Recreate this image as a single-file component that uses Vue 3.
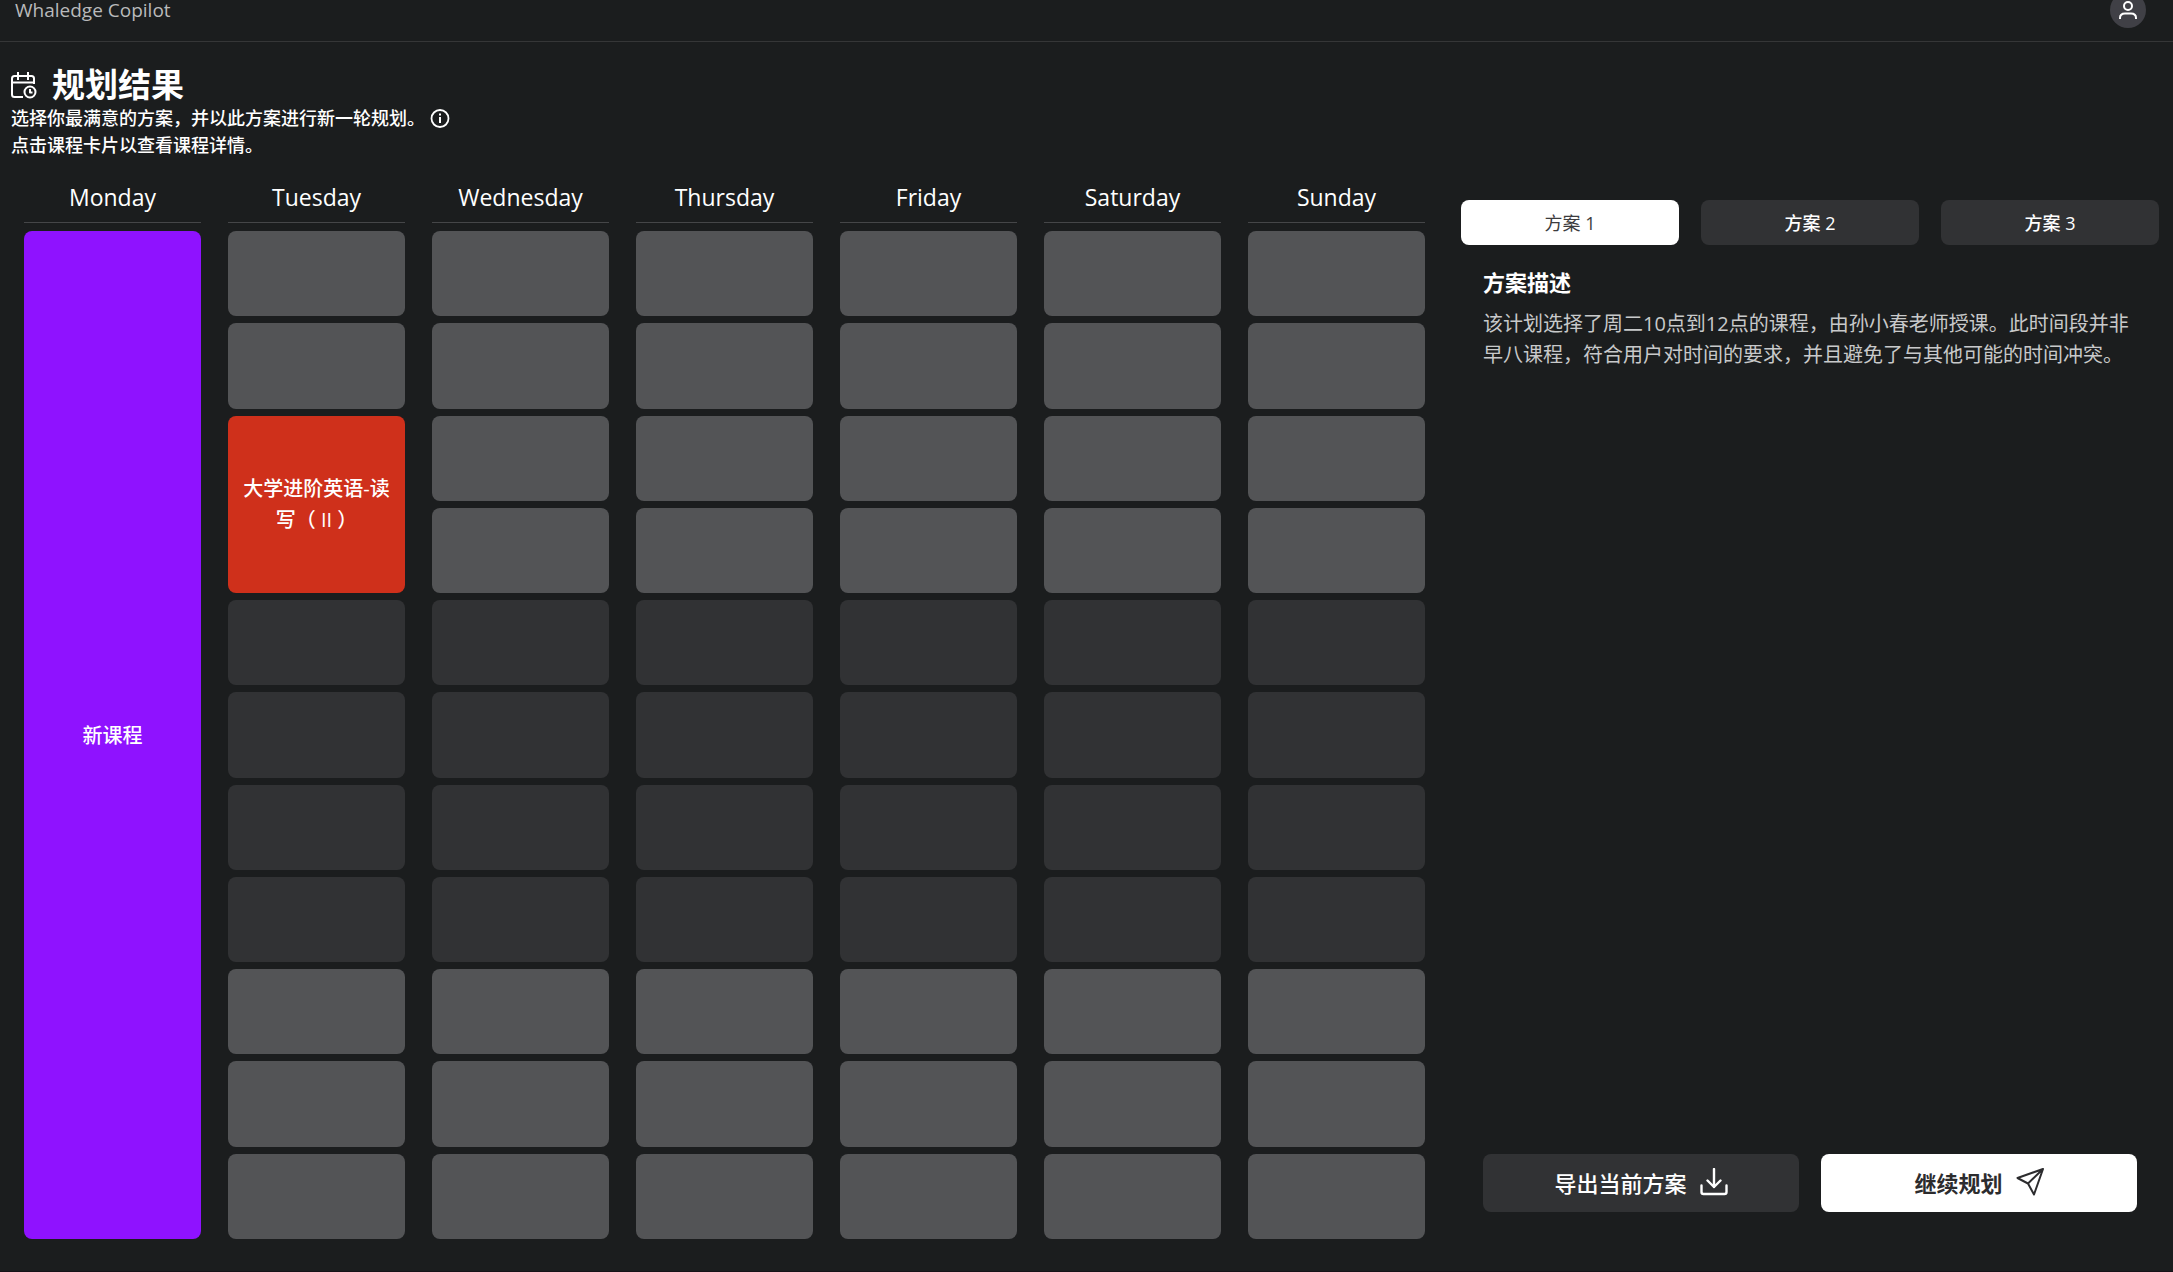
<script setup>
import { ref } from 'vue'

const days = ['Monday', 'Tuesday', 'Wednesday', 'Thursday', 'Friday', 'Saturday', 'Sunday']
const courses = [
  { day: 0, start: 0, span: 11, name: '新课程', color: '#8f12ff' },
  { day: 1, start: 2, span: 2, name: '大学进阶英语-读写（ II ）', color: '#cf301b' }
]

// Builds the cells of one day: courses take several rows, the rest are free slots.
function cellsOf(day) {
  const cells = []
  for (let row = 0; row < 11; ) {
    const course = courses.find((c) => c.day === day && c.start === row)
    cells.push(course ? { row, ...course } : { row, span: 1, dim: row >= 4 && row < 8 })
    row += course ? course.span : 1
  }
  return cells
}
const columns = days.map((name, i) => ({ name, cells: cellsOf(i) }))
const plans = ['方案 1', '方案 2', '方案 3']
const active = ref(0)
</script>

<template>
  <div class="page">
    <header class="topbar">
      <span class="brand">Whaledge Copilot</span>
      <button class="avatar" aria-label="Account">
        <svg width="20" height="20" viewBox="0 0 20 20" fill="none" stroke="#fff" stroke-width="2">
          <circle cx="10" cy="6" r="4" />
          <path d="M2 19v-1c0-3 2-4.500 5-4.500h6c3 0 5 1.500 5 4.500v1" />
        </svg>
      </button>
    </header>

    <section class="intro">
      <h1>
        <svg width="26" height="28" viewBox="0 0 26 28" fill="none" stroke="#fff" stroke-width="2" stroke-linejoin="round">
          <path d="M12 26H3.500Q1 26 1 23.500V7.500Q1 5 3.500 5H20.500Q23 5 23 7.500V13M1 11.500H23" />
          <path d="M7 1v8M17 1v8" />
          <circle cx="19" cy="21" r="5.500" />
          <path d="M19 18v3.500h2.500" />
        </svg>
        规划结果
      </h1>
      <p>
        选择你最满意的方案，并以此方案进行新一轮规划。
        <button class="info" aria-label="Info">
          <svg width="20" height="20" viewBox="0 0 20 20" fill="none" stroke="#fff" stroke-width="2">
            <circle cx="10" cy="9.500" r="8.500" stroke-width="1.800" />
            <path d="M10 8v6M10 4.500v2" />
          </svg>
        </button>
      </p>
      <p>点击课程卡片以查看课程详情。</p>
    </section>

    <main class="body">
      <section class="calendar">
        <div v-for="col in columns" :key="col.name" class="day">
          <h2>{{ col.name }}</h2>
          <div class="slots">
            <component
              :is="cell.name ? 'button' : 'div'"
              v-for="cell in col.cells"
              :key="cell.row"
              class="cell"
              :class="{ dim: cell.dim }"
              :style="{ gridRow: 'span ' + cell.span, background: cell.color }"
            >{{ cell.name }}</component>
          </div>
        </div>
      </section>

      <aside class="side">
        <nav class="tabs">
          <button
            v-for="(plan, i) in plans"
            :key="plan"
            class="tab"
            :class="{ active: active === i }"
            @click="active = i"
          >{{ plan }}</button>
        </nav>
        <div class="detail">
          <h3>方案描述</h3>
          <p>该计划选择了周二10点到12点的课程，由孙小春老师授课。此时间段并非早八课程，符合用户对时间的要求，并且避免了与其他可能的时间冲突。</p>
        </div>
        <div class="actions">
          <button class="action">
            导出当前方案
            <svg width="28" height="28" viewBox="0 0 28 28" fill="none" stroke="#fff" stroke-width="2.400" stroke-linecap="round" stroke-linejoin="round">
              <path d="M14 1v18M7.500 12.500 14 19l6.500-6.500M1.500 17.500v6.500q0 2 2 2h21q2 0 2-2V17.500" />
            </svg>
          </button>
          <button class="action primary">
            继续规划
            <svg width="28" height="28" viewBox="0 0 28 28" fill="none" stroke="#2c2c2e" stroke-width="2" stroke-linejoin="round">
              <path d="M27 1 1.500 10 12 15.500 18 26.500ZM27 1 12 15.500" />
            </svg>
          </button>
        </div>
      </aside>
    </main>
  </div>
</template>

<style>
body {
  background: #1b1d1e;
}
</style>

<style scoped>
.page {
  box-sizing: border-box;
  min-height: 100vh;
  display: flex;
  flex-direction: column;
  border-bottom: 1px solid #161217;
  color: #fff;
  font-family: "Open Sans", "Noto Sans CJK SC", sans-serif;
}
h1, h2, h3, p {
  margin: 0;
}
button {
  border: 0;
  padding: 0;
  font: inherit;
  color: inherit;
  cursor: pointer;
}
.topbar {
  height: 41px;
  display: flex;
  justify-content: space-between;
  align-items: flex-start;
  padding: 0 27px 0 15px;
  border-bottom: 1px solid #353637;
}
.brand {
  font-size: 19px;
  line-height: 20px;
  color: #b9babb;
}
.avatar {
  width: 36px;
  height: 36px;
  margin-top: -8px;
  border-radius: 50%;
  background: #404046;
  display: grid;
  place-items: center;
}
.intro {
  padding: 23px 11px 0;
  font-size: 18px;
  line-height: 27px;
  font-weight: 500;
}
.intro p {
  display: flex;
  align-items: center;
  gap: 5px;
}
h1 {
  display: flex;
  align-items: center;
  gap: 15px;
  font-size: 33px;
  line-height: 40px;
  font-weight: 700;
}
.info {
  display: grid;
  background: none;
}
.body {
  flex: 1;
  display: flex;
  padding: 20px 14px 32px 24px;
  gap: 36px;
}
.calendar {
  flex: 1401;
  min-width: 0;
  display: flex;
  gap: 27px;
}
.day {
  flex: 1;
  min-width: 0;
  display: flex;
  flex-direction: column;
}
h2 {
  font-size: 23px;
  line-height: 32px;
  font-weight: 500;
  text-align: center;
  padding: 2px 0 9px;
  border-bottom: 1px solid #454648;
  margin-bottom: 8px;
}
.slots {
  flex: 1;
  display: grid;
  grid-template-rows: repeat(11, 1fr);
  gap: 7px;
}
.cell {
  box-sizing: border-box;
  min-width: 0;
  padding: 0 12px;
  border-radius: 8px;
  background: #535456;
  font-size: 20px;
  line-height: 31px;
  font-weight: 500;
}
.dim {
  background: #313234;
}
.side {
  flex: 698;
  min-width: 0;
  display: flex;
  flex-direction: column;
  padding-top: 21px;
}
.tabs,
.actions {
  display: flex;
  gap: 22px;
}
.tab {
  flex: 1;
  height: 45px;
  padding-bottom: 2px;
  border-radius: 8px;
  background: #313234;
  font-size: 18px;
  font-weight: 500;
}
.active {
  background: #fff;
  color: #3c3c3e;
  font-weight: 400;
}
.detail {
  flex: 1;
  padding: 21px 22px 0;
}
h3 {
  font-size: 22px;
  line-height: 32px;
  font-weight: 700;
}
.detail p {
  padding-top: 10px;
  font-size: 20px;
  line-height: 31px;
  color: #c8c9ca;
}
.actions {
  padding: 0 22px 27px;
}
.action {
  flex: 1;
  height: 58px;
  padding-bottom: 2px;
  border-radius: 8px;
  background: #313234;
  display: flex;
  align-items: center;
  justify-content: center;
  gap: 13px;
  font-size: 22px;
  font-weight: 500;
}
.primary {
  background: #fff;
  color: #2c2c2e;
  font-weight: 700;
}
</style>
